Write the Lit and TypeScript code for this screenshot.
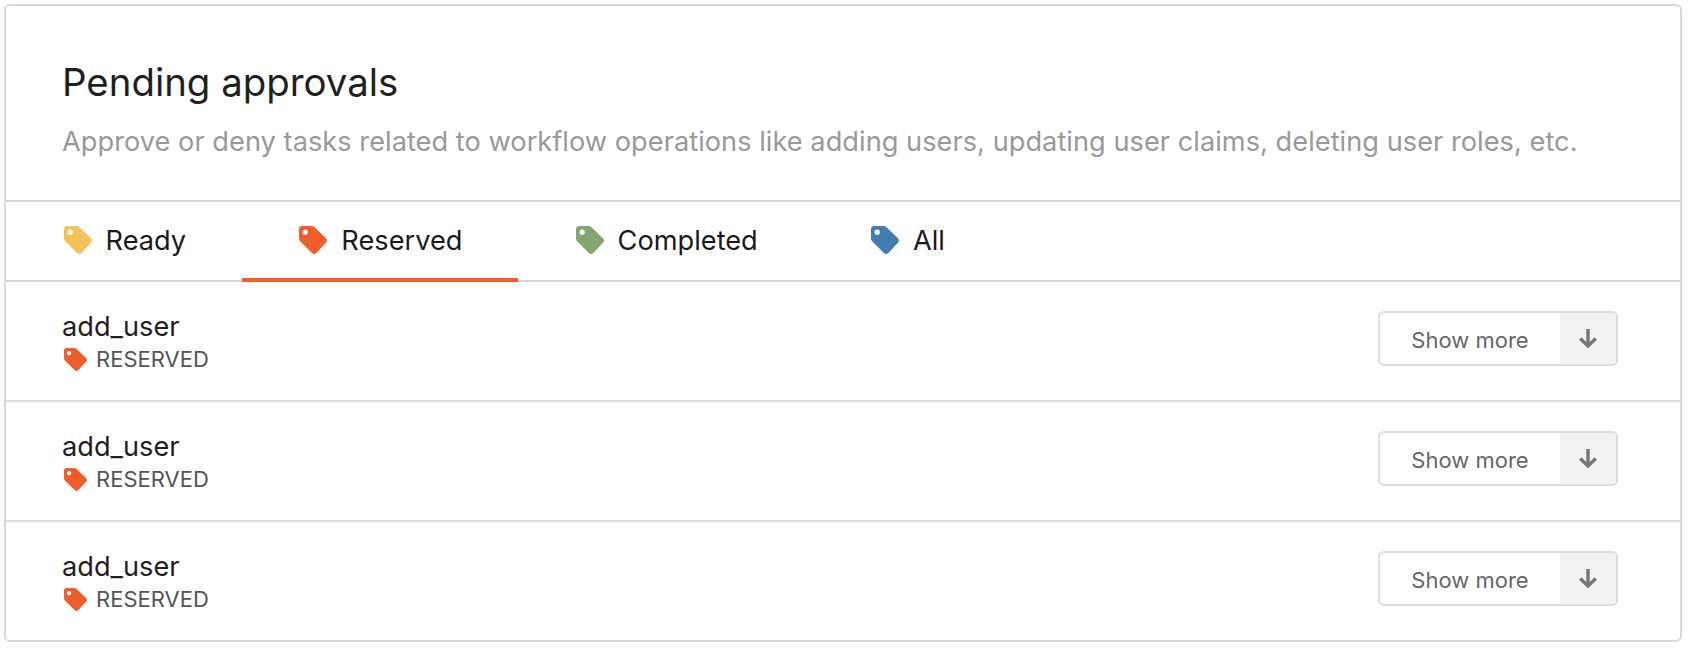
import { LitElement, html, css, svg } from 'lit';
import { customElement } from 'lit/decorators.js';

const tagIcon = (color: string, size: number) => html`
  <svg class="tag" width=${size} height=${size} viewBox="0 0 28 28">
    ${svg`<path fill=${color} fill-rule="evenodd" d="M3 0H12.6C13.6 0 14.6 .4 15.3 1.1L26.9 12.3C28.3 13.6 28.3 15.4 26.9 16.7L17.4 26.9C16 28.3 14.2 28.3 12.9 26.9L1.1 15.3C.4 14.6 0 13.6 0 12.6V3C0 1.3 1.3 0 3 0ZM6.2 3.6A2.6 2.6 0 1 0 6.2 8.8A2.6 2.6 0 1 0 6.2 3.6Z" />`}
  </svg>
`;

const tabs = [
  { label: 'Ready', color: '#f4c25a' },
  { label: 'Reserved', color: '#f05d2b', active: true },
  { label: 'Completed', color: '#84a56f' },
  { label: 'All', color: '#437db0' },
];

@customElement('app-root')
export class AppRoot extends LitElement {
  static styles = css`
    :host {
      display: block;
      padding: 4px 6px 6px 4px;
      font-family: Inter, 'Liberation Sans', sans-serif;
      color: #1f1f1f;
    }

    .card {
      height: 638px;
      box-sizing: border-box;
      border: 2px solid #d9d9dc;
      border-radius: 6px;
      display: flex;
      flex-direction: column;
    }

    .header {
      height: 194px;
      box-sizing: border-box;
      padding: 51px 56px 0;
    }

    h1 {
      margin: 0;
      font-size: 38.4px;
      line-height: 50px;
      font-weight: 400;
    }

    .sub {
      margin: 17px 0 0;
      font-size: 27.2px;
      line-height: 36px;
      letter-spacing: 0.03px;
      color: #999;
    }

    .tabs {
      display: flex;
      height: 82px;
      box-sizing: border-box;
      border-top: 2px solid #d6d6d6;
      border-bottom: 2px solid #d6d6d6;
    }

    .tab {
      display: flex;
      align-items: center;
      gap: 14px;
      padding: 0 55.6px 0 57.6px;
      font-size: 27.2px;
      color: #1a1a1a;
      margin-bottom: -2px;
      border-bottom: 4px solid transparent;
    }

    .tab.active {
      border-bottom-color: #f05d2b;
    }

    .row {
      height: 120px;
      box-sizing: border-box;
      display: flex;
      align-items: center;
      justify-content: space-between;
      padding: 0 62px 0 56px;
      border-bottom: 2px solid #dedede;
    }

    .row:last-child {
      border-bottom: none;
      height: 118px;
    }

    .info {
      padding-top: 2px;
    }

    .name {
      font-size: 27.2px;
      line-height: 32px;
    }

    .status {
      display: flex;
      align-items: center;
      gap: 9px;
      margin-top: 2px;
      font-size: 22px;
      line-height: 28px;
      color: #555;
      padding-left: 2px;
    }

    .more {
      display: flex;
      width: 240px;
      height: 55px;
      margin-bottom: 6px;
      box-sizing: border-box;
      border: 2px solid #ddd;
      border-radius: 6px;
      overflow: hidden;
      font-size: 22px;
      color: #666;
    }

    .more span {
      flex: 1;
      display: flex;
      align-items: center;
      justify-content: center;
      padding-top: 3px;
    }

    .arrow {
      width: 56px;
      background: #f2f2f2;
      display: flex;
      align-items: center;
      justify-content: center;
    }
  `;

  render() {
    return html`
      <div class="card">
        <div class="header">
          <h1>Pending approvals</h1>
          <p class="sub">Approve or deny tasks related to workflow operations like adding users, updating user claims, deleting user roles, etc.</p>
        </div>
        <div class="tabs">
          ${tabs.map(
            (t) => html`
              <div class="tab ${t.active ? 'active' : ''}">
                ${tagIcon(t.color, 28)}
                <span>${t.label}</span>
              </div>
            `
          )}
        </div>
        ${[0, 1, 2].map(
          () => html`
            <div class="row">
              <div class="info">
                <div class="name">add_user</div>
                <div class="status">${tagIcon('#f05d2b', 23)}RESERVED</div>
              </div>
              <div class="more">
                <span>Show more</span>
                <div class="arrow">
                  <svg width="18" height="19" viewBox="0 0 18 19" fill="none" stroke="#777" stroke-width="3.4">
                    <path d="M9 0V17M1.2 9.6L9 17L16.8 9.6" />
                  </svg>
                </div>
              </div>
            </div>
          `
        )}
      </div>
    `;
  }
}
